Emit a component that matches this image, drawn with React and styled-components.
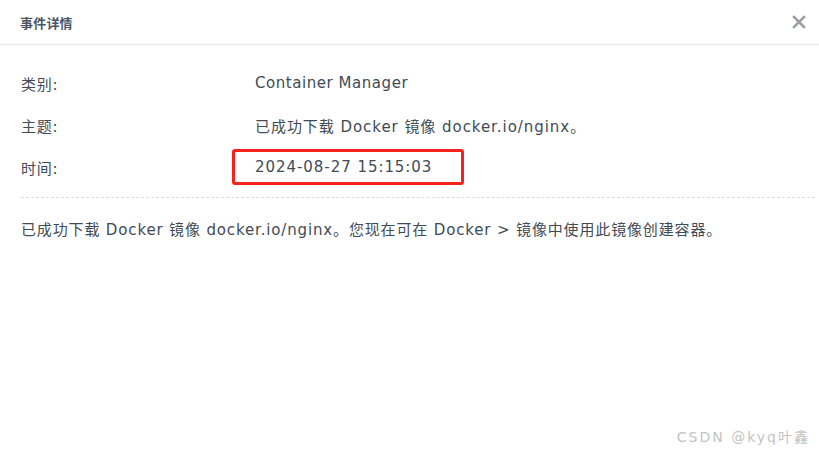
import styled, { createGlobalStyle } from "styled-components";

const Global = createGlobalStyle`
   html, body {
      margin: 0;
      padding: 0;
      background: #ffffff;
   }
   body {
      font-family: "DejaVu Sans", "Noto Sans CJK SC", sans-serif;
      color: #414b55;
   }
`

const Dialog = styled.div`
   position: relative;
   width: 819px;
   height: 454px;
   background: #fff;
   overflow: hidden;
`

const Header = styled.div`
   display: flex;
   align-items: center;
   justify-content: space-between;
   height: 44px;
   padding: 0 8px 0 20px;
   border-bottom: 1px solid #e6e9ec;
`

const Title = styled.h1`
   margin: 0;
   font-family: "Noto Sans CJK SC", sans-serif;
   font-size: 13px;
   font-weight: 700;
   color: #4b5563;
   letter-spacing: 0.2px;
`

const Close = styled.button`
   display: flex;
   align-items: center;
   justify-content: center;
   width: 24px;
   height: 24px;
   padding: 0;
   border: none;
   background: none;
   color: #9aa0a6;
   cursor: pointer;
`

const Body = styled.div`
   padding: 17px 4px 0 21px;
`

const Row = styled.div`
   display: grid;
   grid-template-columns: 234px 1fr;
   align-items: center;
   height: 42px;
   font-size: 15px;
   letter-spacing: 0.7px;
`

const Label = styled.span`
   color: #414b55;
`

const Value = styled.span`
   position: relative;
   color: #414b55;
   letter-spacing: ${(p) => (p.$tight ? "0.55px" : "0.95px")};
`

const Mark = styled.span`
   position: absolute;
   left: -23px;
   top: 50%;
   margin-top: -18px;
   width: 226px;
   height: 30px;
   border: 3px solid #f5231b;
   border-radius: 3px;
`

const Divider = styled.hr`
   margin: 9px 0 0 0;
   border: none;
   border-top: 1px dashed #d9dde2;
`

const Desc = styled.p`
   margin: 22px 0 0 0;
   font-size: 15px;
   line-height: 20px;
   letter-spacing: 0.85px;
   color: #414b55;
`

const Watermark = styled.div`
   position: absolute;
   right: 9px;
   bottom: 8px;
   font-size: 14px;
   letter-spacing: 2px;
   color: #c3c3c3;
`

const rows = [
   { label: "类别:", value: "Container Manager", tight: true },
   { label: "主题:", value: "已成功下载 Docker 镜像 docker.io/nginx。" },
   { label: "时间:", value: "2024-08-27 15:15:03", marked: true },
]

export default function App() {
   return (
      <Dialog>
         <Global />
         <Header>
            <Title>事件详情</Title>
            <Close aria-label="close">
               <svg width="14" height="14" viewBox="0 0 14 14">
                  <path d="M2 2 L12 12 M12 2 L2 12" stroke="currentColor" strokeWidth="2.6" strokeLinecap="square" />
               </svg>
            </Close>
         </Header>
         <Body>
            {rows.map((r) => (
               <Row key={r.label}>
                  <Label>{r.label}</Label>
                  <Value $tight={r.tight}>
                     {r.value}
                     {r.marked && <Mark />}
                  </Value>
               </Row>
            ))}
            <Divider />
            <Desc>已成功下载 Docker 镜像 docker.io/nginx。您现在可在 Docker &gt; 镜像中使用此镜像创建容器。</Desc>
         </Body>
         <Watermark>CSDN @kyq叶鑫</Watermark>
      </Dialog>
   );
}
